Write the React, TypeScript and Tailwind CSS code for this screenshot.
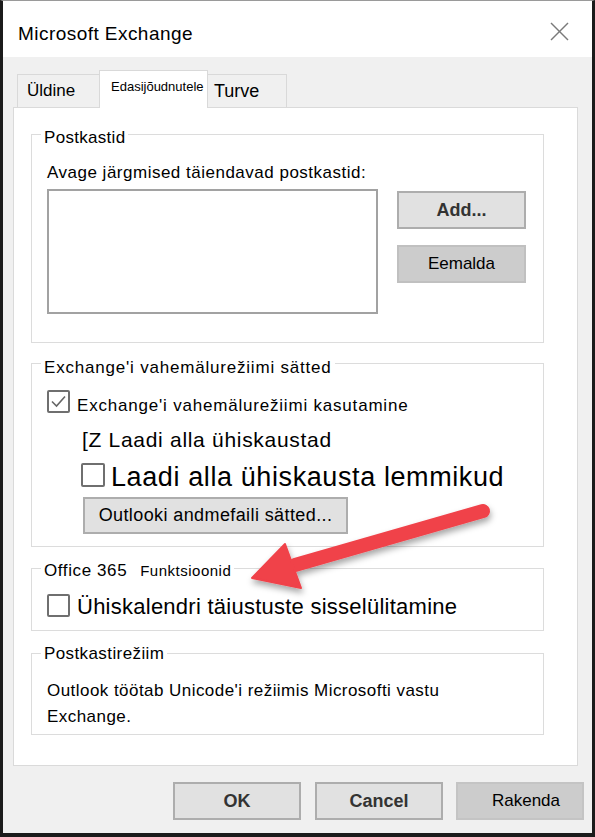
import type { ReactNode } from "react"

function Group({
  legend,
  legendClass,
  className,
  children,
}: {
  legend: ReactNode
  legendClass: string
  className: string
  children: ReactNode
}) {
  return (
    <fieldset className={`ml-[17px] w-[513px] border border-[#dcdcdc] ${className}`}>
      <legend className={`ml-[9px] px-[3px] text-[17px] leading-[20px] text-black ${legendClass}`}>
        {legend}
      </legend>
      {children}
    </fieldset>
  )
}

function CheckBox({ checked = false, className = "" }: { checked?: boolean; className?: string }) {
  return (
    <span
      className={`flex h-[23px] w-[23px] shrink-0 items-center justify-center rounded-[2px] border-2 border-[#6f6f6f] bg-white ${className}`}
    >
      {checked && (
        <svg width="17" height="17" viewBox="0 0 17 17">
          <polyline points="2,8.5 6.5,13 15,3.5" fill="none" stroke="#666" strokeWidth="1.6" />
        </svg>
      )}
    </span>
  )
}

export default function App() {
  return (
    <div className="relative h-[837px] w-[595px] overflow-hidden border-x-[3px] border-b-[4px] border-t border-[#1b1b1b] border-t-[#9a9a9a] bg-[#f0f0f0] font-['Liberation_Sans',Arial,sans-serif] text-black">
      {/* title bar */}
      <div className="flex h-[56px] items-start justify-between bg-white pl-[15px] pr-[23px] pt-[21px]">
        <span className="text-[19px] leading-[24px] tracking-[0.45px]">Microsoft Exchange</span>
        <svg width="19" height="19" viewBox="0 0 19 19">
          <line x1="1" y1="1" x2="18" y2="18" stroke="#7a7a7a" strokeWidth="1.4" />
          <line x1="18" y1="1" x2="1" y2="18" stroke="#7a7a7a" strokeWidth="1.4" />
        </svg>
      </div>

      <div className="pl-[10px]">
        {/* tabs */}
        <div className="ml-[4px] mt-[13px] flex items-end">
          <div className="h-[33px] w-[82px] border-l border-t border-[#d9d9d9] pl-[9px] pt-[6px] text-[17px] leading-[20px]">
            Üldine
          </div>
          <div className="relative z-10 -mb-px h-[38px] w-[109px] border-x border-t border-[#d9d9d9] bg-white pl-[11px] pt-[8px] text-[13px] leading-[16px]">
            Edasijõudnutele
          </div>
          <div className="h-[33px] w-[79px] border-r border-t border-[#d9d9d9] pl-[6px] pt-[5px] text-[18px] leading-[22px]">
            Turve
          </div>
        </div>

        {/* panel */}
        <div className="h-[659px] w-[565px] border border-[#dadada] bg-white">
          <Group legend="Postkastid" legendClass="pt-[8px] tracking-[0.3px]" className="mt-[12px] pb-[28px]">
            <div className="px-[15px]">
              <div className="mt-[15px] text-[17px] leading-[20px] tracking-[0.5px]">
                Avage järgmised täiendavad postkastid:
              </div>
              <div className="mt-[6px] flex items-start">
                <div className="h-[125px] w-[331px] border-2 border-[#a2a2a2] bg-white" />
                <div className="ml-[19px] mt-[2px] flex flex-col gap-[16px]">
                  <button className="h-[38px] w-[129px] border-2 border-[#adadad] bg-[#e1e1e1] text-[18px] font-semibold text-[#333]">
                    Add...
                  </button>
                  <button className="h-[38px] w-[129px] border-2 border-[#c0c0c0] bg-[#cccccc] text-[17px] text-black">
                    Eemalda
                  </button>
                </div>
              </div>
            </div>
          </Group>

          <Group
            legend="Exchange'i vahemälurežiimi sätted"
            legendClass="pt-[10px] tracking-[0.8px]"
            className="mt-[5px] pb-[12px]"
          >
            <div className="px-[15px]">
              <div className="mt-[12px] flex items-start">
                <CheckBox checked />
                <span className="ml-[7px] mt-[6px] text-[17px] leading-[20px] tracking-[0.8px]">
                  Exchange'i vahemälurežiimi kasutamine
                </span>
              </div>
              <div className="mt-[12px] pl-[35px] text-[21px] leading-[24px] tracking-[0.7px]">
                [Z Laadi alla ühiskaustad
              </div>
              <div className="mt-[10px] flex items-start pl-[34px]">
                <CheckBox className="mt-[1px] h-[24px] w-[24px]" />
                <span className="ml-[6px] text-[27px] leading-[30px] tracking-[0.6px]">
                  Laadi alla ühiskausta lemmikud
                </span>
              </div>
              <button className="ml-[36px] mt-[5px] h-[37px] w-[265px] border-2 border-[#adadad] bg-[#e1e1e1] text-[18px] tracking-[0.4px] text-black">
                Outlooki andmefaili sätted...
              </button>
            </div>
          </Group>

          <Group
            legend={
              <span className="flex items-baseline">
                <span className="tracking-[0.6px]">Office 365</span>
                <span className="ml-[13px] text-[15px] tracking-[0.5px]">Funktsioonid</span>
              </span>
            }
            legendClass="pt-[6px]"
            className="mt-[8px] pb-[10px]"
          >
            <div className="px-[15px]">
              <div className="mt-[13px] flex items-start">
                <CheckBox />
                <span className="ml-[7px] text-[22px] leading-[26px] tracking-[0.25px]">
                  Ühiskalendri täiustuste sisselülitamine
                </span>
              </div>
            </div>
          </Group>

          <Group legend="Postkastirežiim" legendClass="pt-[2px] tracking-[0.4px]" className="mt-[11px] pb-[4px]">
            <div className="px-[15px]">
              <p className="mt-[14px] w-[430px] text-[17px] leading-[26px] tracking-[0.45px]">
                Outlook töötab Unicode'i režiimis Microsofti vastu Exchange.
              </p>
            </div>
          </Group>
        </div>
      </div>

      {/* footer buttons */}
      <div className="mt-[16px] flex justify-end pr-[8px]">
        <button className="h-[38px] w-[128px] border-2 border-[#adadad] bg-[#e1e1e1] text-[18px] font-semibold text-[#333]">
          OK
        </button>
        <button className="ml-[14px] h-[38px] w-[128px] border-2 border-[#adadad] bg-[#e1e1e1] text-[18px] font-semibold text-[#333]">
          Cancel
        </button>
        <button className="ml-[13px] h-[38px] w-[128px] border-2 border-[#c4c4c4] bg-[#cccccc] pl-[12px] text-[17px] text-black">
          Rakenda
        </button>
      </div>

      {/* red annotation arrow */}
      <svg className="pointer-events-none absolute left-[-3px] top-[-1px]" width="595" height="837" viewBox="0 0 595 837">
        <defs>
          <filter id="shadow" x="-20%" y="-20%" width="140%" height="160%">
            <feDropShadow dx="1" dy="4" stdDeviation="3" floodColor="#000" floodOpacity="0.35" />
          </filter>
        </defs>
        <g filter="url(#shadow)" fill="#f0424a" stroke="#f0424a">
          <line x1="483" y1="511" x2="295" y2="565" strokeWidth="14" strokeLinecap="round" />
          <polygon points="252,578 285,544 301,588" strokeWidth="2" strokeLinejoin="round" />
        </g>
      </svg>
    </div>
  )
}
